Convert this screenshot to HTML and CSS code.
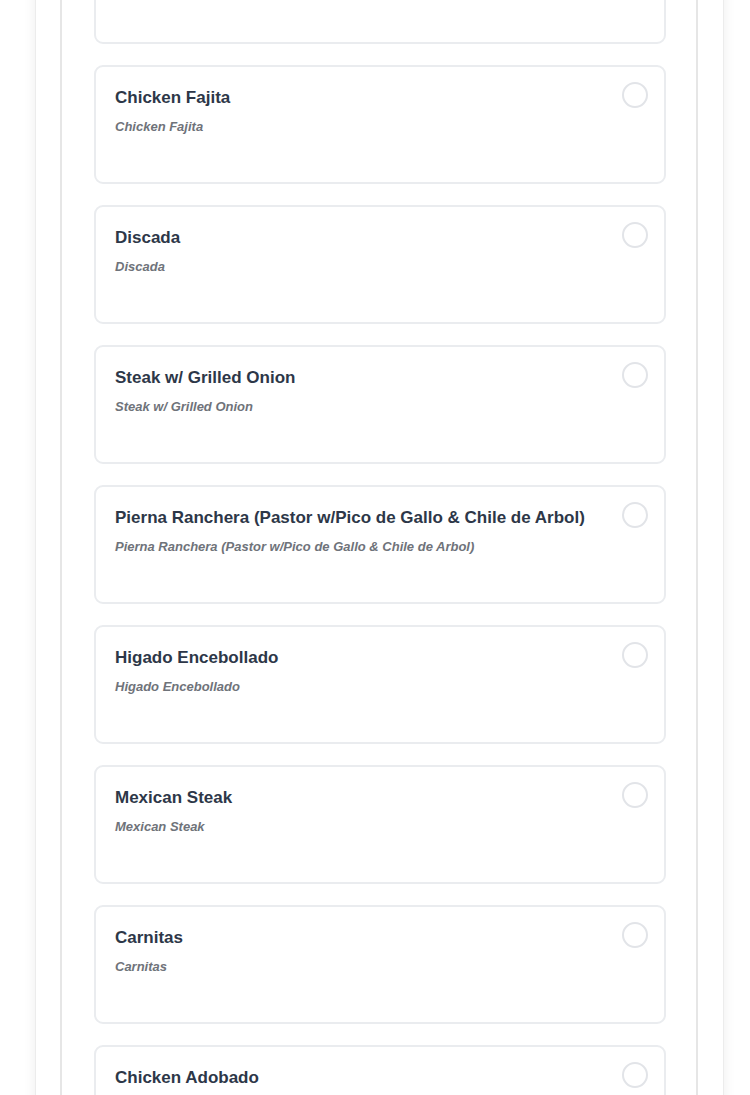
FILE: index.html
```html
<!DOCTYPE html>
<html lang="en">
<head>
<meta charset="utf-8">
<title>Menu options</title>
<link rel="stylesheet" href="styles.css">
</head>
<body>
<div class="shell">
  <div class="panel">
    <div class="option">
      <div class="option-text"></div>
    </div>
    <div class="option">
      <div class="option-text">
        <div class="option-title">Chicken Fajita</div>
        <div class="option-sub">Chicken Fajita</div>
      </div>
      <span class="radio"></span>
    </div>
    <div class="option">
      <div class="option-text">
        <div class="option-title">Discada</div>
        <div class="option-sub">Discada</div>
      </div>
      <span class="radio"></span>
    </div>
    <div class="option">
      <div class="option-text">
        <div class="option-title">Steak w/ Grilled Onion</div>
        <div class="option-sub">Steak w/ Grilled Onion</div>
      </div>
      <span class="radio"></span>
    </div>
    <div class="option">
      <div class="option-text">
        <div class="option-title">Pierna Ranchera (Pastor w/Pico de Gallo &amp; Chile de Arbol)</div>
        <div class="option-sub">Pierna Ranchera (Pastor w/Pico de Gallo &amp; Chile de Arbol)</div>
      </div>
      <span class="radio"></span>
    </div>
    <div class="option">
      <div class="option-text">
        <div class="option-title">Higado Encebollado</div>
        <div class="option-sub">Higado Encebollado</div>
      </div>
      <span class="radio"></span>
    </div>
    <div class="option">
      <div class="option-text">
        <div class="option-title">Mexican Steak</div>
        <div class="option-sub">Mexican Steak</div>
      </div>
      <span class="radio"></span>
    </div>
    <div class="option">
      <div class="option-text">
        <div class="option-title">Carnitas</div>
        <div class="option-sub">Carnitas</div>
      </div>
      <span class="radio"></span>
    </div>
    <div class="option">
      <div class="option-text">
        <div class="option-title">Chicken Adobado</div>
      </div>
      <span class="radio"></span>
    </div>
  </div>
</div>
</body>
</html>
```
FILE: styles.css
```css
html, body {
  margin: 0;
  padding: 0;
  overflow: hidden;
  background: #ffffff;
  font-family: "Liberation Sans", Arial, sans-serif;
}

*, *::before, *::after {
  box-sizing: border-box;
}

.shell {
  width: 689px;
  margin: -118px 0 0 35px;
  padding: 20px 25px 20px 24px;
  background: #ffffff;
  border: 1px solid #ececec;
  box-shadow: 0 0 12px rgba(0, 0, 0, 0.07);
}

.panel {
  border: 2px solid #e6e6e6;
  padding: 20px 30px 20px 32px;
  background: #ffffff;
}

.option {
  display: flex;
  align-items: flex-start;
  min-height: 119px;
  margin-bottom: 21px;
  padding: 21px 16px 20px 19px;
  border: 2px solid #eaecef;
  border-radius: 9px;
  background: #ffffff;
}

.option-text {
  flex: 1;
  min-width: 0;
}

.option-title {
  font-size: 17px;
  line-height: 20px;
  font-weight: 700;
  color: #2d3748;
}

.option-sub {
  margin-top: 11px;
  font-size: 13px;
  line-height: 16px;
  font-weight: 700;
  font-style: italic;
  color: #6f737a;
}

.radio {
  flex: none;
  width: 26px;
  height: 26px;
  margin-top: -6px;
  border: 2px solid #e2e4e8;
  border-radius: 50%;
  background: #ffffff;
}
```
